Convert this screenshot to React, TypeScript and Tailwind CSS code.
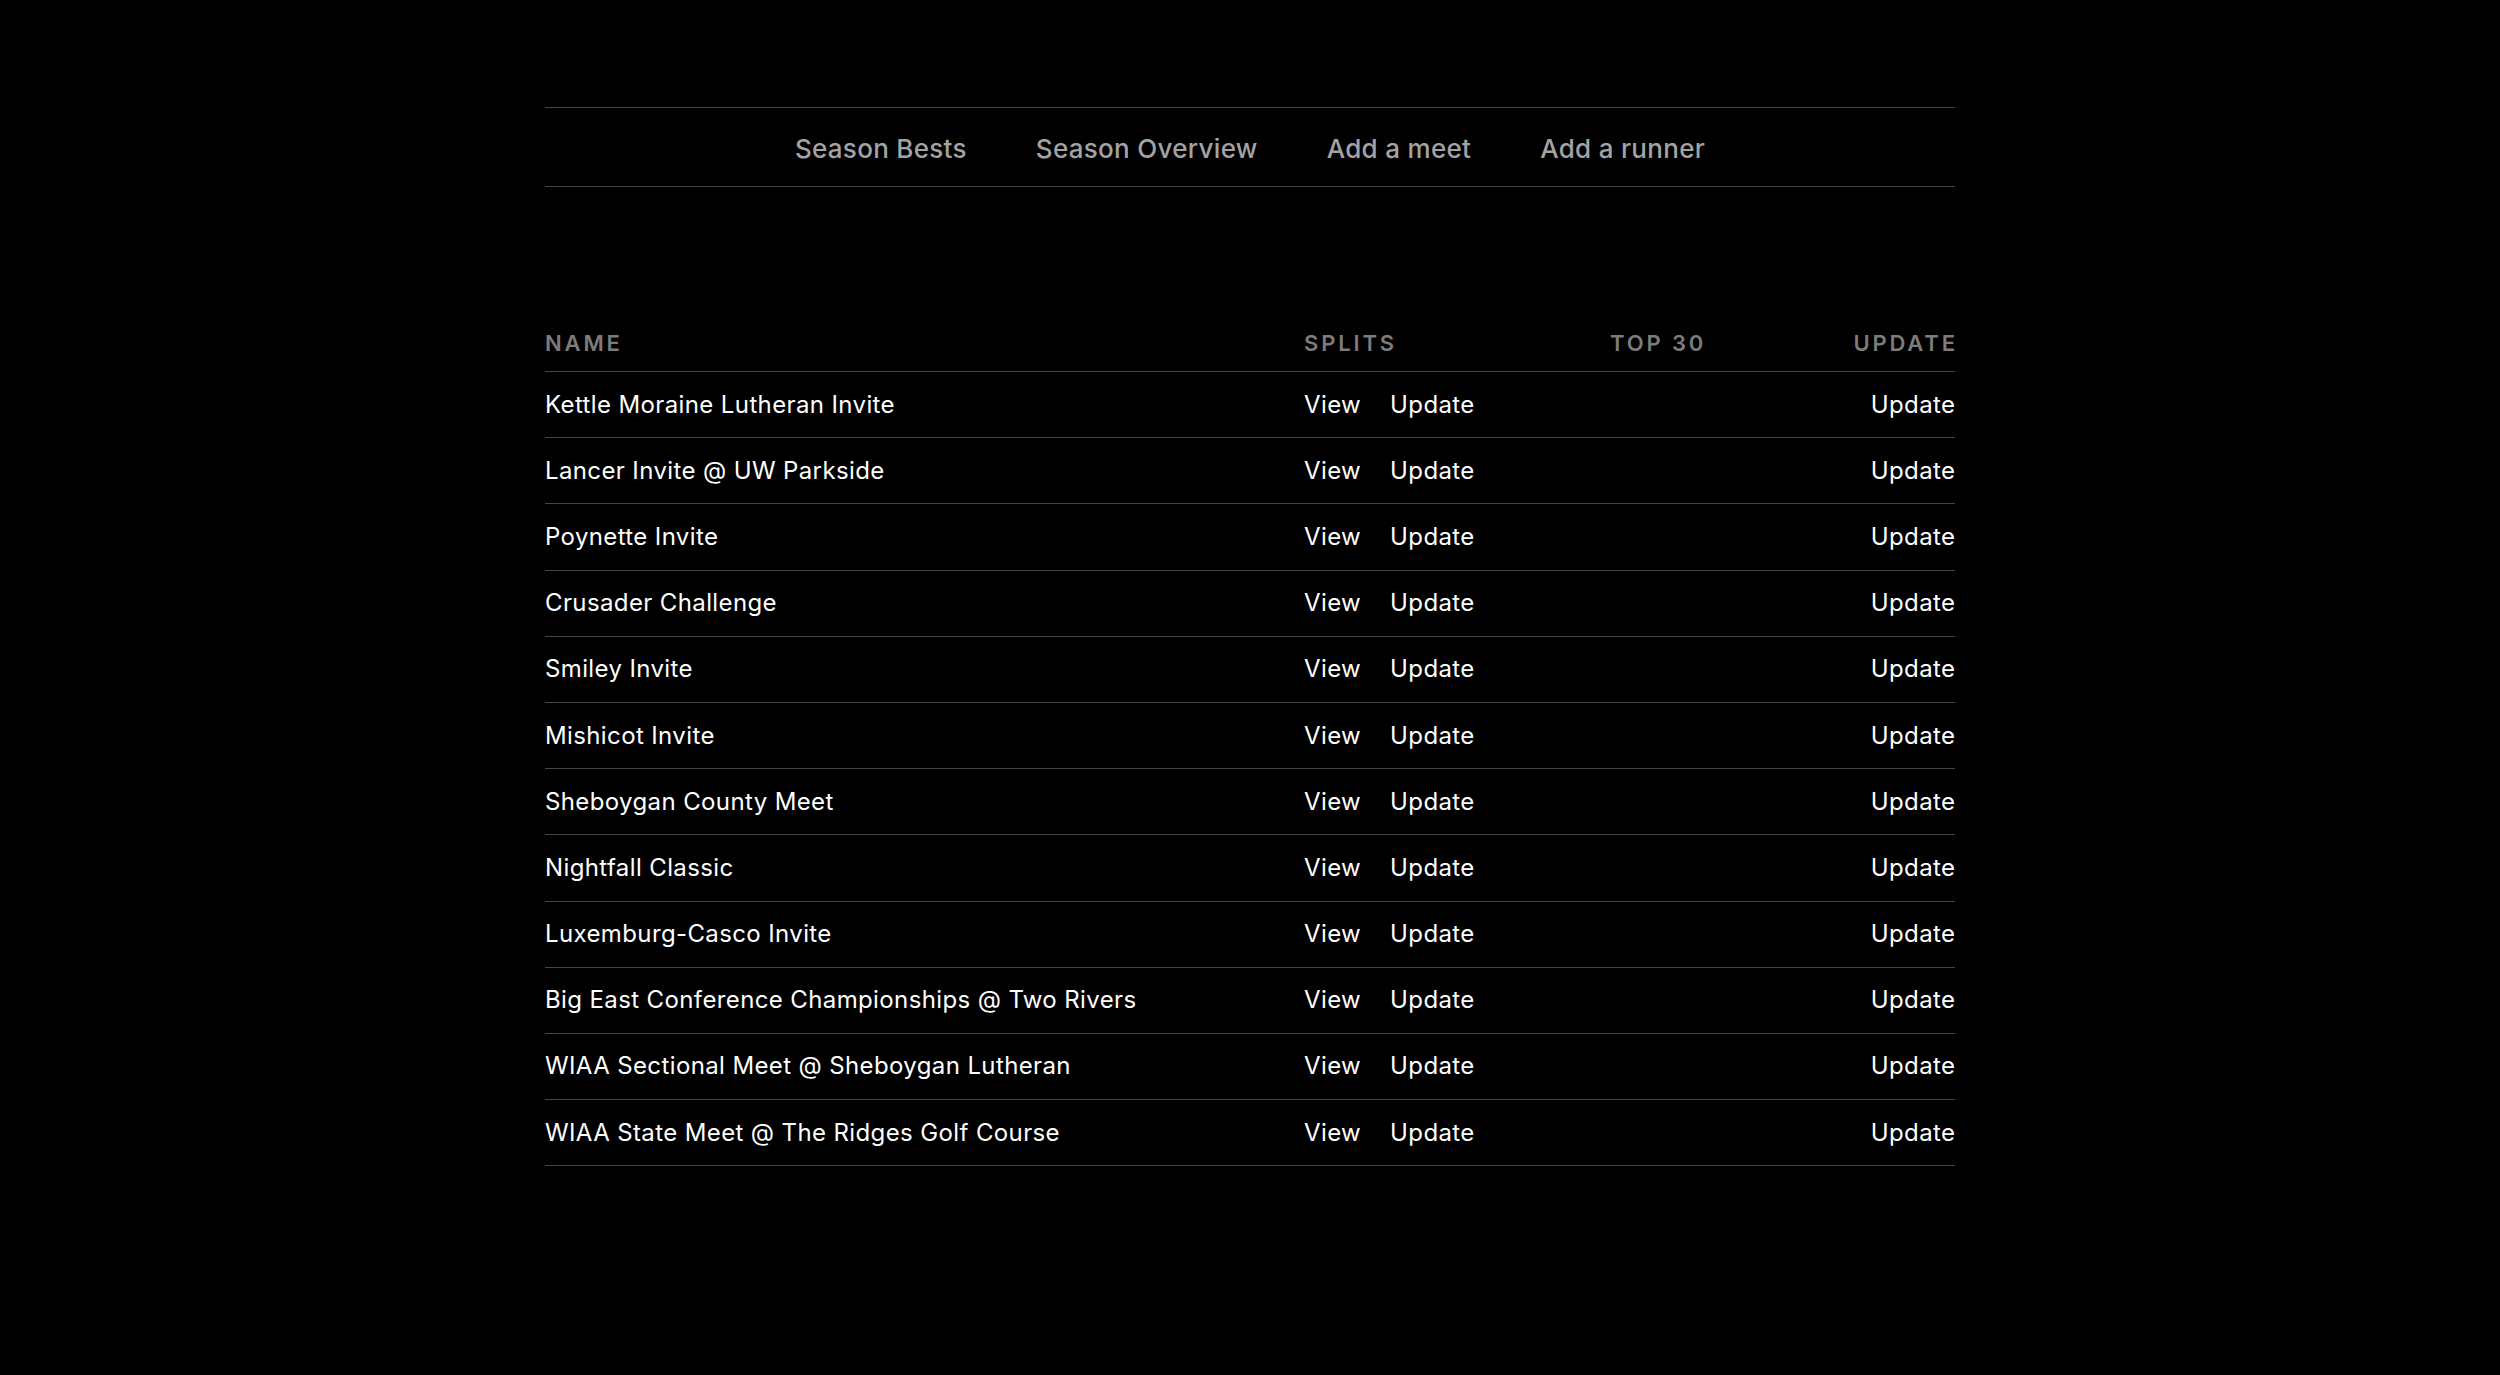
const meets = [
  'Kettle Moraine Lutheran Invite',
  'Lancer Invite @ UW Parkside',
  'Poynette Invite',
  'Crusader Challenge',
  'Smiley Invite',
  'Mishicot Invite',
  'Sheboygan County Meet',
  'Nightfall Classic',
  'Luxemburg-Casco Invite',
  'Big East Conference Championships @ Two Rivers',
  'WIAA Sectional Meet @ Sheboygan Lutheran',
  'WIAA State Meet @ The Ridges Golf Course',
];

const navLinks = ['Season Bests', 'Season Overview', 'Add a meet', 'Add a runner'];

function NavBar() {
  return (
    <nav className="flex h-[80px] items-center justify-center gap-[69px] border-y border-[#454545] pt-[3px]">
      {navLinks.map((label) => (
        <a
          key={label}
          href="#"
          className="text-[26px] font-medium leading-none tracking-[0.3px] text-[#a3a3a3] hover:text-white"
        >
          {label}
        </a>
      ))}
    </nav>
  );
}

function MeetsTable() {
  return (
    <div className="mt-[140px]">
      {/* Header */}
      <div className="flex border-b border-[#454545] pb-[12px] text-[22px] font-semibold leading-[32px] tracking-[0.13em] text-[#7c7c7c]">
        <div className="w-[759px]">NAME</div>
        <div className="w-[306px]">SPLITS</div>
        <div className="flex-1">TOP 30</div>
        <div className="-mr-[0.13em]">UPDATE</div>
      </div>

      {/* Rows */}
      {meets.map((name) => (
        <div
          key={name}
          className="flex h-[66.2px] items-center border-b border-[#454545] text-[24px] leading-[32px] tracking-[0.38px] text-white"
        >
          <div className="w-[759px]">{name}</div>
          <div className="flex w-[309px] gap-[29px]">
            <a href="#">View</a>
            <a href="#">Update</a>
          </div>
          <div className="flex-1" />
          <a href="#" className="-mr-[0.38px]">
            Update
          </a>
        </div>
      ))}
    </div>
  );
}

export default function App() {
  return (
    <div className="min-h-[1375px] bg-black font-['Inter',sans-serif] antialiased">
      <div className="mx-auto w-[1410px] pt-[107px]">
        <NavBar />
        <MeetsTable />
      </div>
    </div>
  );
}
